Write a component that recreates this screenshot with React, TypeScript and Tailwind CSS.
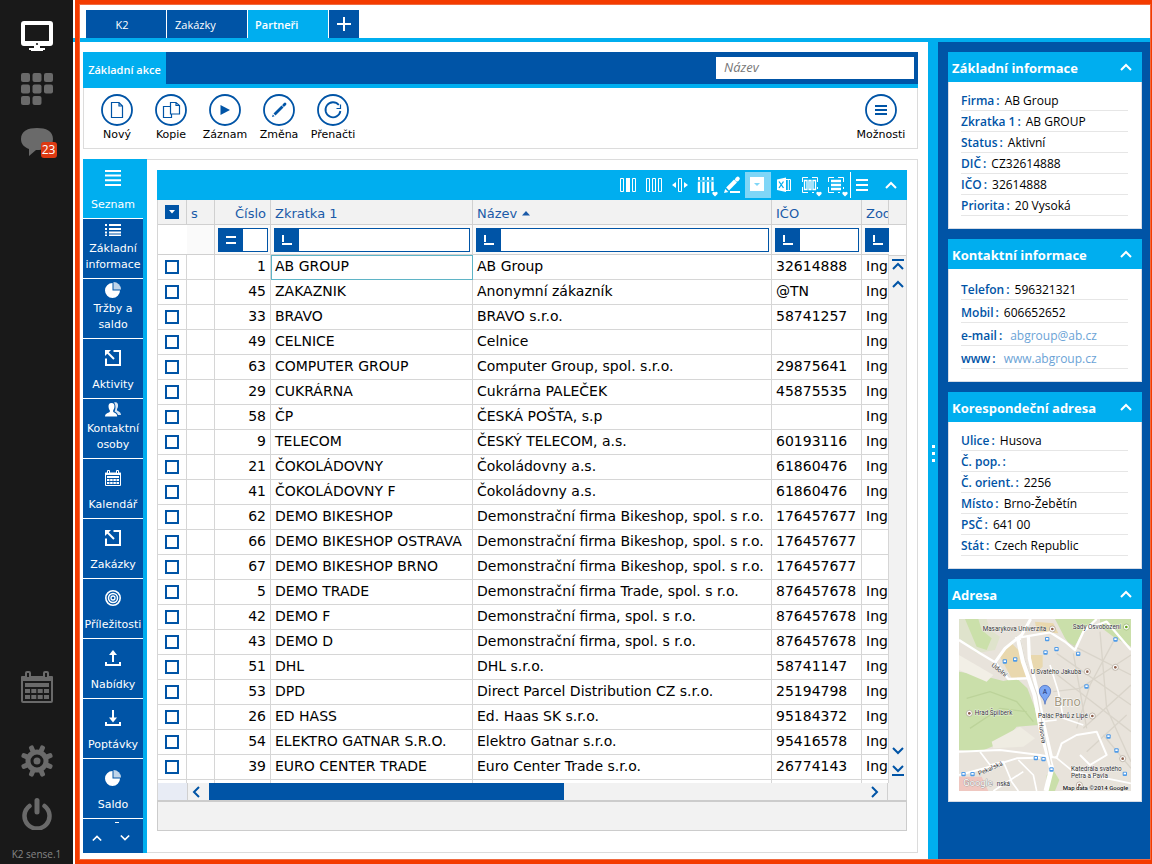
import type { ReactNode } from "react";

type Partner = {
  id: number;
  code: string;
  name: string;
  ico: string;
  owner: string;
};

const PARTNERS: Partner[] = [
  { id: 1, code: "AB GROUP", name: "AB Group", ico: "32614888", owner: "Ing" },
  { id: 45, code: "ZAKAZNIK", name: "Anonymní zákazník", ico: "@TN", owner: "Ing" },
  { id: 33, code: "BRAVO", name: "BRAVO s.r.o.", ico: "58741257", owner: "Ing" },
  { id: 49, code: "CELNICE", name: "Celnice", ico: "", owner: "Ing" },
  { id: 63, code: "COMPUTER GROUP", name: "Computer Group, spol. s.r.o.", ico: "29875641", owner: "Ing" },
  { id: 29, code: "CUKRÁRNA", name: "Cukrárna PALEČEK", ico: "45875535", owner: "Ing" },
  { id: 58, code: "ČP", name: "ČESKÁ POŠTA, s.p", ico: "", owner: "Ing" },
  { id: 9, code: "TELECOM", name: "ČESKÝ TELECOM, a.s.", ico: "60193116", owner: "Ing" },
  { id: 21, code: "ČOKOLÁDOVNY", name: "Čokoládovny a.s.", ico: "61860476", owner: "Ing" },
  { id: 41, code: "ČOKOLÁDOVNY F", name: "Čokoládovny a.s.", ico: "61860476", owner: "Ing" },
  { id: 62, code: "DEMO BIKESHOP", name: "Demonstrační firma Bikeshop, spol. s r.o.", ico: "176457677", owner: "Ing" },
  { id: 66, code: "DEMO BIKESHOP OSTRAVA", name: "Demonstrační firma Bikeshop, spol. s r.o.", ico: "176457677", owner: "" },
  { id: 67, code: "DEMO BIKESHOP BRNO", name: "Demonstrační firma Bikeshop, spol. s r.o.", ico: "176457677", owner: "" },
  { id: 5, code: "DEMO TRADE", name: "Demonstrační firma Trade, spol. s r.o.", ico: "876457678", owner: "Ing" },
  { id: 42, code: "DEMO F", name: "Demonstrační firma, spol. s r.o.", ico: "876457678", owner: "Ing" },
  { id: 43, code: "DEMO D", name: "Demonstrační firma, spol. s r.o.", ico: "876457678", owner: "Ing" },
  { id: 51, code: "DHL", name: "DHL s.r.o.", ico: "58741147", owner: "Ing" },
  { id: 53, code: "DPD", name: "Direct Parcel Distribution CZ s.r.o.", ico: "25194798", owner: "Ing" },
  { id: 26, code: "ED HASS", name: "Ed. Haas SK s.r.o.", ico: "95184372", owner: "Ing" },
  { id: 54, code: "ELEKTRO GATNAR S.R.O.", name: "Elektro Gatnar s.r.o.", ico: "95416578", owner: "Ing" },
  { id: 39, code: "EURO CENTER TRADE", name: "Euro Center Trade s.r.o.", ico: "26774143", owner: "Ing" },
];

type ChevronProps = { dir: "up" | "down" | "left" | "right"; size?: number; bar?: boolean };

function Chevron({ dir, size = 12, bar = false }: ChevronProps) {
  const paths = {
    up: "M1 9 L6 4 L11 9",
    down: "M1 3 L6 8 L11 3",
    left: "M9 1 L4 6 L9 11",
    right: "M3 1 L8 6 L3 11",
  };
  return (
    <svg width={size} height={size} viewBox="0 0 12 12" fill="none" stroke="currentColor" strokeWidth="2" overflow="visible">
      <path d={paths[dir]} />
      {bar && <path d={dir === "up" ? "M0 0 H12" : "M0 12 H12"} />}
    </svg>
  );
}

/* ---------- dark application bar ---------- */

function CalendarIcon({ size }: { size: number }) {
  return (
    <svg width={size} height={size} viewBox="0 0 32 32">
      <path
        fill="currentColor"
        fillRule="evenodd"
        d="M1 5 H4 V2 a2 2 0 0 1 2-2 h2 a2 2 0 0 1 2 2 V5 H22 V2 a2 2 0 0 1 2-2 h2 a2 2 0 0 1 2 2 V5 H31 a1 1 0 0 1 1 1 V30 a2 2 0 0 1-2 2 H2 a2 2 0 0 1-2-2 V6 a1 1 0 0 1 1-1 Z M6 2 V6 H8 V2 Z M24 2 V6 H26 V2 Z M2 10 V30 H30 V10 Z"
      />
      <g fill="currentColor">
        <rect x="4" y="12" width="24" height="4" />
        {[4, 10.3, 16.7, 23].map((x) => (
          <g key={x}>
            <rect x={x} y="18" width="5" height="4" />
            <rect x={x} y="24" width="5" height="4" />
          </g>
        ))}
      </g>
    </svg>
  );
}

function AppBar() {
  return (
    <aside className="flex w-[73px] shrink-0 flex-col items-center justify-between bg-[#191919] pb-[2px] pt-5 text-[#6a6a6a]">
      <nav className="flex flex-col items-center">
        <button type="button" aria-label="Plocha" className="text-white">
          <svg width="32" height="32" viewBox="0 0 32 32" fill="currentColor">
            <path fillRule="evenodd" d="M3 1 H29 a3 3 0 0 1 3 3 V23 a3 3 0 0 1-3 3 H3 a3 3 0 0 1-3-3 V4 a3 3 0 0 1 3-3 Z M4 5 V21 H28 V5 Z" />
            <circle cx="16" cy="24" r="1.1" fill="#191919" />
            <path d="M13 26 H19 V28 H24 V30 H22 V31 H10 V30 H8 V28 H13 Z" />
          </svg>
        </button>
        <button type="button" aria-label="Aplikace" className="mt-[21px]">
          <svg width="32" height="32" viewBox="0 0 32 32" fill="currentColor">
            {[[0, 0], [11.5, 0], [23, 0], [0, 11.5], [11.5, 11.5], [23, 11.5], [0, 23], [11.5, 23]].map(([x, y]) => (
              <rect key={`${x}-${y}`} x={x} y={y} width="9" height="9" rx="2" />
            ))}
          </svg>
        </button>
        <button type="button" aria-label="Zprávy" className="relative mt-[23px]">
          <svg width="32" height="29" viewBox="0 0 32 29" fill="currentColor">
            <path d="M16 0 C25 0 32 3 32 11 C32 20 24 22 15 22 L8 28 V21 C3 19 0 16 0 11 C0 3 7 0 16 0 Z" />
          </svg>
          <span className="absolute -right-1 top-[14px] flex h-4 w-4 items-center justify-center rounded-[3px] bg-[#dc3912] font-['Open_Sans',sans-serif] text-[12px] leading-none text-white">
            23
          </span>
        </button>
      </nav>
      <div className="flex flex-col items-center">
        <button type="button" aria-label="Kalendář">
          <CalendarIcon size={32} />
        </button>
        <button type="button" aria-label="Nastavení" className="mt-[42px]">
          <svg width="32" height="32" viewBox="0 0 32 32">
            <circle cx="16" cy="16" r="9" fill="none" stroke="currentColor" strokeWidth="5" />
            <circle cx="16" cy="16" r="3.5" fill="currentColor" />
            {[22.5, 67.5, 112.5, 157.5, 202.5, 247.5, 292.5, 337.5].map((a) => (
              <rect key={a} x="13.5" y="-0.5" width="5" height="7" rx="2" fill="currentColor" transform={`rotate(${a} 16 16)`} />
            ))}
          </svg>
        </button>
        <button type="button" aria-label="Vypnout" className="mt-[21px]">
          <svg width="32" height="32" viewBox="0 0 32 32" fill="none" stroke="currentColor" strokeWidth="4.5" strokeLinecap="round">
            <path d="M8.5 8 A12.5 12.5 0 1 0 23.5 8" />
            <path d="M16 2.5 V14" strokeWidth="5" />
          </svg>
        </button>
        <span className="mt-4 h-4 whitespace-nowrap font-['Open_Sans',sans-serif] text-[10px] leading-4 text-[#868686]">K2 sense.1</span>
      </div>
    </aside>
  );
}

/* ---------- tabs + ribbon ---------- */

function TabStrip() {
  return (
    <div className="flex gap-px border-b-4 border-[#00aeef] bg-white pl-[13px] pt-[10px] font-['Open_Sans',sans-serif] text-[11px] text-white">
      <button type="button" className="h-7 w-20 bg-[#0054a6] pr-2 pt-[2px]">K2</button>
      <button type="button" className="h-7 w-20 bg-[#0054a6] pl-2 pt-[2px] text-left">Zakázky</button>
      <button type="button" className="h-7 w-20 bg-[#00aeef] pl-[7px] pt-[2px] text-left font-semibold">Partneři</button>
      <button type="button" aria-label="Nová záložka" className="flex h-7 w-[30px] items-center justify-center bg-[#0054a6]">
        <svg width="14" height="14" viewBox="0 0 14 14" stroke="currentColor" strokeWidth="2">
          <path d="M7 0 V14 M0 7 H14" />
        </svg>
      </button>
    </div>
  );
}

function RibbonButton({ label, children }: { label: string; children: ReactNode }) {
  return (
    <button type="button" className="flex w-[54px] flex-col items-center gap-px text-[11px] leading-4 text-black">
      <svg width="32" height="32" viewBox="0 0 32 32" className="text-[#0054a6]" fill="none" stroke="currentColor">
        <circle cx="16" cy="16" r="15" strokeWidth="1.8" />
        {children}
      </svg>
      <span className="whitespace-nowrap">{label}</span>
    </button>
  );
}

function Ribbon() {
  return (
    <section>
      <div className="flex bg-[#0054a6]">
        <button type="button" className="w-[83px] whitespace-nowrap bg-[#00aeef] font-['Open_Sans',sans-serif] text-[11px] font-semibold text-white">
          Základní akce
        </button>
        <div className="flex flex-1 justify-end border-b-4 border-[#00aeef] py-[5px] pr-1">
          <input
            aria-label="Název"
            placeholder="Název"
            className="h-[22px] w-[198px] bg-white px-2 pb-[2px] font-['Open_Sans',sans-serif] text-[13px] italic text-black placeholder:text-[#777777]"
          />
        </div>
      </div>
      <div className="flex justify-between border border-t-0 border-[#dcdcdc] bg-white px-[6px] pb-[5px] pt-[6px]">
        <div className="flex">
          <RibbonButton label="Nový">
            <path d="M10.5 8.5 H18 L21.5 12 V23.5 H10.5 Z M18 8.5 V12 H21.5" strokeWidth="1.2" />
          </RibbonButton>
          <RibbonButton label="Kopie">
            <path d="M15.5 8.5 H21 L24.5 11.5 V20 H15.5 Z M21 8.5 V11.5 H24.5" strokeWidth="1.2" />
            <path d="M15.5 12.5 H8.5 V23.5 H16.5 V20" strokeWidth="1.2" />
          </RibbonButton>
          <RibbonButton label="Záznam">
            <path d="M11.5 11 L21 16 L11.5 21 Z" fill="currentColor" stroke="none" />
          </RibbonButton>
          <RibbonButton label="Změna">
            <path d="M11.5 20.5 L19.5 12.5" strokeWidth="2.8" />
            <path d="M20.8 11.2 L22 10" strokeWidth="2.8" strokeLinecap="round" />
            <path d="M9 23 L9.8 20.4 L11.6 22.2 Z" fill="currentColor" stroke="none" />
          </RibbonButton>
          <RibbonButton label="Přenačti">
            <path d="M21.8 11 A7.5 7.5 0 1 0 23.4 17" strokeWidth="1.8" />
            <path d="M23.5 10.5 V14.5 H19.5" strokeWidth="1.2" />
          </RibbonButton>
        </div>
        <div className="pr-[3px]">
          <RibbonButton label="Možnosti">
            <path d="M10 12 H22 M10 16 H22 M10 20 H22" strokeWidth="2" />
          </RibbonButton>
        </div>
      </div>
    </section>
  );
}

/* ---------- module navigation ---------- */

const PieIcon = (
  <svg width="16" height="16" viewBox="0 0 16 16" fill="currentColor">
    <path d="M7.5 1 A7.5 7.5 0 1 0 15 8.5 H7.5 Z" />
    <path d="M8.5 0 A7.5 7.5 0 0 1 16 7.5 H8.5 Z" fillOpacity="0.75" />
  </svg>
);

const ArrowBoxIcon = (
  <svg width="16" height="16" viewBox="0 0 16 16" fill="none" stroke="currentColor" strokeWidth="2">
    <path d="M8.5 1 H15 V15 H1 V8.5" />
    <path d="M2.5 2.5 L9 9" />
    <path d="M0 0 H6 L0 6 Z" fill="currentColor" stroke="none" />
  </svg>
);

type NavItem = { label: string; icon: ReactNode; tall?: boolean; active?: boolean };

const NAV: NavItem[] = [
  {
    label: "Seznam",
    active: true,
    icon: (
      <svg width="16" height="16" viewBox="0 0 16 16" fill="currentColor">
        <path d="M0 0 H16 V2 H0 Z M0 4.6 H16 V6.6 H0 Z M0 9.3 H16 V11.3 H0 Z M0 14 H16 V16 H0 Z" />
      </svg>
    ),
  },
  {
    label: "Základní informace",
    tall: true,
    icon: (
      <svg width="16" height="16" viewBox="0 0 16 16" fill="currentColor">
        <path d="M0 2 H2 V4 H0 Z M4 2 H16 V4 H4 Z M0 6 H2 V8 H0 Z M4 6 H16 V8 H4 Z M0 9.5 H2 V11.5 H0 Z M4 9.5 H16 V11.5 H4 Z" />
        <path d="M0 12.5 H2 V14 H0 Z M4 12.5 H16 V14 H4 Z" />
      </svg>
    ),
  },
  { label: "Tržby a saldo", tall: true, icon: PieIcon },
  { label: "Aktivity", icon: ArrowBoxIcon },
  {
    label: "Kontaktní osoby",
    tall: true,
    icon: (
      <svg width="16" height="16" viewBox="0 0 16 16" fill="currentColor">
        <path d="M6.5 1 C9 1 9.8 3 9.4 5.3 C9.2 6.8 8.6 7.6 8.2 8.2 V10 C10 11 12 11.2 12.2 14.5 H0 C0.2 11.2 3 11 4.8 10 V8.2 C4.2 7.6 3.8 6.8 3.6 5.3 C3.2 3 4 1 6.5 1 Z" />
        <path d="M10 0.2 C12.4 0 13.4 2 13 4.2 C12.8 5.6 12.4 6.4 12 7 V8.6 C13.6 9.6 15.8 10 16 13 H13 C12.4 11 11 10.2 9.6 9.4 C10.6 7.6 11.2 3 9 0.5 Z" fillOpacity="0.85" />
      </svg>
    ),
  },
  { label: "Kalendář", icon: <CalendarIcon size={16} /> },
  { label: "Zakázky", icon: ArrowBoxIcon },
  {
    label: "Příležitosti",
    icon: (
      <svg width="16" height="16" viewBox="0 0 16 16" fill="none" stroke="currentColor">
        <circle cx="8" cy="8" r="7.2" strokeWidth="1.6" />
        <circle cx="8" cy="8" r="4.5" strokeWidth="1.5" />
        <circle cx="8" cy="8" r="2" strokeWidth="1.3" />
      </svg>
    ),
  },
  {
    label: "Nabídky",
    icon: (
      <svg width="16" height="16" viewBox="0 0 16 16" fill="none" stroke="currentColor" strokeWidth="2">
        <path d="M1 12 V15 H15 V12 M8 12 V3" />
        <path d="M8 0 L12 5 H4 Z" fill="currentColor" stroke="none" />
      </svg>
    ),
  },
  {
    label: "Poptávky",
    icon: (
      <svg width="16" height="16" viewBox="0 0 16 16" fill="none" stroke="currentColor" strokeWidth="2">
        <path d="M1 12 V15 H15 V12 M8 0 V9" />
        <path d="M8 12.5 L12 7.5 H4 Z" fill="currentColor" stroke="none" />
      </svg>
    ),
  },
  { label: "Saldo", icon: PieIcon },
];

function ModuleNav() {
  return (
    <nav className="flex w-16 shrink-0 flex-col bg-[#00aeef] text-[11px] leading-4 text-white">
      {NAV.map((item) => (
        <button
          key={item.label}
          type="button"
          className={
            "flex h-[60px] w-[60px] flex-col items-center justify-between border-b border-white pb-[5px] " +
            (item.tall ? "pt-[3px] " : "pt-[11px] ") +
            (item.active ? "bg-[#00aeef]" : "bg-[#0054a6]")
          }
        >
          {item.icon}
          <span>{item.label}</span>
        </button>
      ))}
      <div className="flex w-[60px] flex-1 flex-col items-center bg-[#0054a6] pt-[3px]">
        <span className="ml-2 h-px w-1 bg-white" />
        <div className="flex flex-1 items-center gap-[18px] pr-1">
          <button type="button" aria-label="Nahoru">
            <Chevron dir="up" size={10} />
          </button>
          <button type="button" aria-label="Dolů">
            <Chevron dir="down" size={10} />
          </button>
        </div>
      </div>
    </nav>
  );
}

/* ---------- grid ---------- */

function ToolButton({ label, active, children }: { label: string; active?: boolean; children: ReactNode }) {
  return (
    <button type="button" aria-label={label} className={"h-[26px] w-[26px] " + (active ? "bg-[#7fd6f7]" : "")}>
      <svg width="26" height="26" viewBox="0 0 26 26" fill="none" stroke="currentColor">
        {children}
      </svg>
    </button>
  );
}

const MenuMark = <path d="M22 24.5 L19.5 22 a1.4 1.4 0 0 1 2.5-1.4 a1.4 1.4 0 0 1 2.5 1.4 Z" fill="currentColor" stroke="none" />;

const CornerFrame = <path d="M5.5 10 V5.5 H11 M15 5.5 H20.5 V10 M5.5 15 V20.5 H11 M15 20.5 H17 M20.5 15 V17" />;

function GridToolbar() {
  return (
    <div className="flex h-[30px] items-center justify-end bg-[#00aeef] text-white">
      <ToolButton label="Zobrazit sloupec">
        <path d="M5.5 6.5 H8.5 V19.5 H5.5 Z M17.5 6.5 H20.5 V19.5 H17.5 Z" />
        <rect x="11" y="6" width="4" height="14" fill="currentColor" stroke="none" />
      </ToolButton>
      <ToolButton label="Sloupce">
        <path d="M5.5 6.5 H8.5 V19.5 H5.5 Z M11.5 6.5 H14.5 V19.5 H11.5 Z M17.5 6.5 H20.5 V19.5 H17.5 Z" />
      </ToolButton>
      <ToolButton label="Šířka sloupce">
        <path d="M11.5 6.5 H14.5 V19.5 H11.5 Z" />
        <path d="M9 10 V16 L5 13 Z M17 10 V16 L21 13 Z" fill="currentColor" stroke="none" />
      </ToolButton>
      <ToolButton label="Výběr sloupců">
        <path d="M6 10 V21 M10.5 10 V21 M15 10 V21 M19.5 10 V19" strokeWidth="2.4" />
        <path d="M6 5 V8 M10.5 5 V8 M15 5 V8 M19.5 5 V8" strokeWidth="2" />
        <path d="M5 9 H21" strokeOpacity="0.6" />
        {MenuMark}
      </ToolButton>
      <ToolButton label="Upravit">
        <path d="M11 20 H21" strokeWidth="2" />
        <path d="M8.6 17 L16.5 9" strokeWidth="4" />
        <path d="M18 7.5 L18.8 6.7" strokeWidth="4" strokeLinecap="round" />
        <path d="M5 21 L6.2 17 L9.4 20 Z" fill="currentColor" stroke="none" />
      </ToolButton>
      <ToolButton label="Filtr" active>
        <rect x="5" y="5" width="14" height="14" fill="currentColor" stroke="none" />
        <path d="M9 11 H15 L12 14 Z" fill="#7fd6f7" stroke="none" />
      </ToolButton>
      <ToolButton label="Export do Excelu">
        <path d="M6 7.5 L15 5.5 V20 L6 18 Z" fill="currentColor" stroke="none" />
        <path d="M15 7.5 H19.5 V18.5 H15 M17.3 7.5 V18.5" />
        <path d="M8 9.5 L12.5 16 M12.5 9.5 L8 16" stroke="#00aeef" strokeWidth="1.3" />
      </ToolButton>
      <ToolButton label="Označit sloupce">
        {CornerFrame}
        <path d="M7.5 8.5 H10 V17.5 H7.5 Z M12 8.5 H14 V17.5 H12 Z M16 8.5 H18.5 V17.5 H16 Z" strokeWidth="1.3" />
        {MenuMark}
      </ToolButton>
      <ToolButton label="Označit řádky">
        {CornerFrame}
        <path d="M8 9 H18 M8 13 H18 M8 17 H18" strokeWidth="2.4" />
        {MenuMark}
      </ToolButton>
      <button type="button" aria-label="Nabídka" className="ml-px flex h-[26px] w-[18px] items-center justify-end border-l border-white">
        <svg width="12" height="12" viewBox="0 0 12 12" stroke="currentColor" strokeWidth="2">
          <path d="M0 1 H12 M0 6 H12 M0 11 H12" />
        </svg>
      </button>
      <button type="button" aria-label="Sbalit" className="ml-[17px] mr-[10px]">
        <Chevron dir="up" />
      </button>
    </div>
  );
}

function FilterField({ label, op }: { label: string; op: "equals" | "starts" }) {
  return (
    <div className="flex h-6 border border-[#0054a6] bg-white">
      <button type="button" aria-label={`Podmínka ${label}`} className="flex w-6 shrink-0 items-center justify-center bg-[#0054a6] text-white">
        <svg width="12" height="12" viewBox="0 0 12 12" fill="none" stroke="currentColor" strokeWidth="2">
          {op === "equals" ? <path d="M1 3 H11 M1 9 H11" /> : <path d="M2 1 V8 M1 10 H11" />}
        </svg>
      </button>
      <input aria-label={`Filtr ${label}`} className="w-full min-w-0 flex-1 bg-white px-1 text-[13px] outline-none" />
    </div>
  );
}

const TH = "h-[25px] overflow-hidden border-b border-r border-[#d0d0d0] bg-[#f2f2f2] p-0 pl-1 pt-[3px] text-left font-normal whitespace-nowrap";
const FILTER = "h-[30px] overflow-hidden border-b border-r border-[#d0d0d0] bg-[#fafafa] p-0 pl-[3px] pr-[2px]";
const TD = "h-[25px] overflow-hidden border-b border-r border-[#d6d6d6] p-0 pb-[2px] pl-1 whitespace-nowrap";

function PartnerTable() {
  return (
    <div className="flex border-x border-[#d6d6d6] bg-white">
      <div className="min-w-0 flex-1">
        <table className="w-full table-fixed border-separate border-spacing-0 text-[14px] leading-5 text-black">
          <colgroup>
            <col className="w-[29px]" />
            <col className="w-[28px]" />
            <col className="w-[56px]" />
            <col className="w-[202px]" />
            <col />
            <col className="w-[90px]" />
            <col className="w-[27px]" />
          </colgroup>
          <thead className="text-[13px] text-[#1a5aa8]">
            <tr>
              <th className="h-[25px] border-b border-r border-[#d0d0d0] bg-[#f2f2f2] p-0">
                <button type="button" aria-label="Označení" className="mx-auto flex h-[14px] w-[14px] items-center justify-center bg-[#0054a6] text-white">
                  <svg width="6" height="4" viewBox="0 0 6 4" fill="currentColor">
                    <path d="M0 0 H6 L3 3.5 Z" />
                  </svg>
                </button>
              </th>
              <th className={TH}>s</th>
              <th className="h-[25px] border-b border-r border-[#d0d0d0] bg-[#f2f2f2] p-0 pr-1 pt-[3px] text-right font-normal">Číslo</th>
              <th className={TH}>Zkratka 1</th>
              <th className={TH}>
                <span className="flex items-center gap-[5px]">
                  Název
                  <svg width="8" height="5" viewBox="0 0 8 5" fill="currentColor">
                    <path d="M4 0 L8 4.5 H0 Z" />
                  </svg>
                </span>
              </th>
              <th className={TH}>IČO</th>
              <th className={TH}>Zod</th>
            </tr>
            <tr>
              <td className="h-[30px] border-b border-[#d0d0d0] bg-white p-0" />
              <td className="h-[30px] border-b border-r border-[#d0d0d0] bg-[#fafafa] p-0" />
              <td className={FILTER}>
                <FilterField label="Číslo" op="equals" />
              </td>
              <td className={FILTER}>
                <FilterField label="Zkratka 1" op="starts" />
              </td>
              <td className={FILTER}>
                <FilterField label="Název" op="starts" />
              </td>
              <td className={FILTER}>
                <FilterField label="IČO" op="starts" />
              </td>
              <td className="h-[30px] overflow-hidden border-b border-[#d0d0d0] bg-[#fafafa] p-0 pl-[3px]">
                <FilterField label="Zod" op="starts" />
              </td>
            </tr>
          </thead>
          <tbody>
            {PARTNERS.map((p, i) => (
              <tr key={p.id}>
                <td className="h-[25px] border-b border-r border-[#d6d6d6] p-0">
                  <input
                    type="checkbox"
                    aria-label={`Označit ${p.code}`}
                    className="mx-auto block h-[14px] w-[14px] appearance-none border-2 border-[#0054a6] bg-white checked:bg-[#00aeef]"
                  />
                </td>
                <td className={TD} />
                <td className="h-[25px] border-b border-r border-[#d6d6d6] p-0 pb-[2px] pr-1 text-right">{p.id}</td>
                <td className={TD + (i === 0 ? " outline -outline-offset-1 outline-[#5fb4c6]" : "")}>{p.code}</td>
                <td className={TD}>{p.name}</td>
                <td className={TD}>{p.ico}</td>
                <td className={TD}>{p.owner}</td>
              </tr>
            ))}
            <tr aria-hidden="true">
              {[0, 1, 2, 3, 4, 5, 6].map((c) => (
                <td key={c} className="h-[3px] border-r border-[#d6d6d6] p-0" />
              ))}
            </tr>
          </tbody>
        </table>
      </div>
      <div className="flex w-[17px] shrink-0 flex-col text-[#0054a6]">
        <div className="h-[25px] border-b border-[#d0d0d0] bg-[#f2f2f2]" />
        <div className="h-[30px] bg-white" />
        <div className="flex flex-1 flex-col items-center justify-between border-t border-[#d0d0d0] bg-[#f2f2f2] pb-[8px] pt-[4px]">
          <div className="flex flex-col gap-[6px]">
            <button type="button" aria-label="Na začátek">
              <Chevron dir="up" bar />
            </button>
            <button type="button" aria-label="O řádek výš">
              <Chevron dir="up" />
            </button>
          </div>
          <div className="flex flex-col gap-[6px]">
            <button type="button" aria-label="O řádek níž">
              <Chevron dir="down" />
            </button>
            <button type="button" aria-label="Na konec">
              <Chevron dir="down" bar />
            </button>
          </div>
        </div>
      </div>
    </div>
  );
}

function GridPanel() {
  return (
    <section className="flex min-w-0 flex-1 flex-col border border-l-0 border-[#dcdcdc] bg-white pb-[21px] pl-[10px] pr-[10px] pt-[10px]">
      <GridToolbar />
      <PartnerTable />
      <div className="flex h-[17px] border-x border-[#d6d6d6] bg-[#f2f2f2] text-[#0054a6]">
        <div className="w-[30px] border-r border-[#d0d0d0] bg-[#e8ecf5]" />
        <button type="button" aria-label="Vlevo" className="flex w-[21px] items-center justify-center pr-[6px]">
          <Chevron dir="left" />
        </button>
        <div className="flex-1">
          <div className="h-full w-[54%] bg-[#0054a6]" />
        </div>
        <button type="button" aria-label="Vpravo" className="flex w-[21px] items-center justify-center pr-1">
          <Chevron dir="right" />
        </button>
        <div className="w-[19px] border-l border-[#d0d0d0]" />
      </div>
      <div className="flex-1 border border-t-2 border-[#cccccc] bg-[#f2f2f2]" />
    </section>
  );
}

/* ---------- preview column ---------- */

type Field = { label: string; value: string; href?: string };

function Card({ title, children }: { title: string; children: ReactNode }) {
  return (
    <section>
      <header className="flex h-[30px] items-center justify-between bg-[#00aeef] pl-1 pr-[10px] text-white">
        <h2 className="whitespace-nowrap pt-[3px] text-[13px] font-bold">{title}</h2>
        <button type="button" aria-label={`Sbalit ${title}`}>
          <Chevron dir="up" />
        </button>
      </header>
      <div className="border border-t-0 border-[#d6dce6] bg-white">{children}</div>
    </section>
  );
}

function FieldList({ fields, roomy }: { fields: Field[]; roomy?: boolean }) {
  return (
    <dl className="pb-3 pl-3 pr-[13px] pt-2 text-[12px]">
      {fields.map((f) => (
        <div
          key={f.label}
          className={"flex items-center gap-[5px] whitespace-nowrap border-b border-[#e6e6e6] " + (roomy ? "h-[23px] pt-[3px]" : "h-[21px] pt-[2px]")}
        >
          <dt className="flex gap-[2px] font-semibold text-[#0054a6]">
            {f.label}
            <span>:</span>
          </dt>
          <dd className="text-black">
            {f.href ? (
              <a href={f.href} className="pl-[3px] text-[#6ba3d6]">
                {f.value}
              </a>
            ) : (
              f.value
            )}
          </dd>
        </div>
      ))}
    </dl>
  );
}

const STOPS = [[316, 232], [349, 222], [414, 236], [321, 192], [526, 193], [439, 334], [505, 484], [529, 526], [287, 549], [310, 552], [334, 583], [70, 597], [97, 597], [554, 596], [194, 259], [225, 253]];
const PLACES = [[337, 162], [442, 290], [526, 277], [88, 415], [457, 423], [548, 551], [418, 630]];

function CityMap() {
  return (
    <svg viewBox="57 132 516 516" className="block w-full" role="img" aria-label="Mapa">
      <rect x="57" y="132" width="516" height="516" fill="#e8e3db" />
      <path d="M57 132 H140 L150 165 L180 185 L165 225 L110 235 L57 190 Z" fill="#dfe3cc" />
      <path d="M75 132 L115 132 L125 165 L155 190 L140 225 L110 215 Z" fill="#cbe0aa" />
      <path d="M57 290 L120 300 L190 318 L230 310 L262 340 L285 400 L295 450 L230 455 L190 500 L120 530 L57 525 Z" fill="#cadfaa" />
      <path d="M57 240 L160 300 L140 320 L57 285 Z" fill="#f2efe6" />
      <path d="M155 500 L240 455 L285 490 L250 515 L160 520 Z" fill="#efece2" />
      <path d="M345 132 H470 L430 165 L400 222 L375 190 Z" fill="#cadfaa" />
      <path d="M480 132 H573 V215 L520 185 L480 155 Z" fill="#cadfaa" />
      <path d="M320 600 L340 585 L358 615 L345 648 H318 Z" fill="#cadfaa" />
      <path d="M180 245 L215 205 L245 235 L262 305 L215 310 Z M272 240 H308 V275 L280 300 Z M285 140 L340 145 L355 175 L290 170 Z" fill="#e9d8ae" />
      <path d="M57 605 H125 L145 648 H57 Z" fill="#efc7c0" />

      <g fill="none" stroke="#d9d4ca" strokeWidth="4">
        <path d="M375 200 L573 300 M350 235 L573 390 M340 290 L573 470 M400 235 L440 460 M480 170 L500 400 L573 560" />
        <path d="M573 240 L420 340 L340 350 M573 330 L430 460 M520 200 L450 330 L410 460 M560 420 L440 530 M490 480 L573 580" />
        <path d="M80 370 L150 350 L230 380 L280 440 M90 460 L180 400 L260 410" stroke="#bcd39a" />
      </g>
      <g fill="none" stroke="#ffffff" strokeLinejoin="round">
        <path d="M57 195 L120 235 L165 262 L205 312 L262 310" strokeWidth="7" />
        <path d="M165 262 L195 220 L245 180 L272 132" strokeWidth="9" />
        <path d="M225 190 L330 172 L375 200 L405 225 L430 170 L470 132" strokeWidth="7" />
        <path d="M235 190 L250 260 L285 360 L305 470 L335 580 L318 648" strokeWidth="15" />
        <path d="M265 180 L268 250 L290 340 L312 450 L335 550" strokeWidth="10" />
        <path d="M430 165 L500 140 L573 225" strokeWidth="7" />
        <path d="M57 530 L180 525 L300 540 L350 548 L365 505 L410 480 L470 470 L500 540 L450 570 L420 540" strokeWidth="6" />
        <path d="M57 600 L150 575 L230 550 L300 548" strokeWidth="6" />
        <path d="M120 530 L150 570 L190 560 L215 620 L235 648 M235 555 L280 600 L290 648 M160 648 L250 590" strokeWidth="5" />
        <path d="M330 270 L355 350 L370 430 L430 450 M305 440 L350 435 M345 545 L400 590 L573 625" strokeWidth="5" />
      </g>
      <path d="M242 195 L256 258 L291 360 L311 470 L333 570" fill="none" stroke="#cfc8bb" strokeWidth="2" />

      {STOPS.map(([x, y]) => (
        <g key={`${x}-${y}`}>
          <rect x={x - 6} y={y - 6} width="13" height="13" rx="3" fill="#4f9be8" />
          <rect x={x - 3} y={y - 3} width="7" height="5" fill="#ffffff" />
        </g>
      ))}
      {PLACES.map(([x, y]) => (
        <g key={`${x}-${y}`}>
          <circle cx={x} cy={y} r="9" fill="#ffffff" stroke="#a89c8c" strokeWidth="2" />
          <circle cx={x} cy={y} r="4" fill="#8b5e4a" />
        </g>
      ))}
      <circle cx="559" cy="156" r="9" fill="#ffffff" stroke="#8fae62" strokeWidth="2" />
      <circle cx="559" cy="156" r="4" fill="#5fa019" />

      <g fill="#2f2f2f" fontFamily="Roboto, sans-serif" fontSize="19" stroke="#ffffff" strokeWidth="2" paintOrder="stroke">
        <text x="128" y="169">Masarykova Univerzita</text>
        <text x="398" y="162">Sady Osvobození</text>
        <text x="272" y="296">U Svatého Jakuba</text>
        <text x="104" y="421">Hrad Špilberk</text>
        <text x="294" y="429">Palác Pánů z Lipé</text>
        <text x="393" y="588">Katedrála svatého</text>
        <text x="393" y="608">Petra a Pavla</text>
        <text transform="translate(153 273) rotate(38)">Údolní</text>
        <text transform="translate(296 442) rotate(82)">Husova</text>
        <text transform="translate(118 602) rotate(-24)">Pekařská</text>
        <text x="170" y="634">nská</text>
      </g>
      <text x="343" y="393" fill="#a49a83" stroke="#ffffff" strokeWidth="3" paintOrder="stroke" fontFamily="Roboto, sans-serif" fontSize="38">
        Brno
      </text>
      <text x="70" y="633" fill="#ffffff" stroke="#8a8a8a" strokeWidth="2" paintOrder="stroke" fontFamily="Roboto, sans-serif" fontSize="28">
        Google
      </text>
      <text x="368" y="644" fill="#111111" stroke="#ffffff" strokeWidth="2" paintOrder="stroke" fontFamily="Roboto, sans-serif" fontSize="18" fontWeight="500">
        Map data ©2014 Google
      </text>

      <path d="M315 388 C313 368 298 364 298 348 A17 17 0 0 1 332 348 C332 364 317 368 315 388 Z" fill="#7ba6f4" stroke="#3c62b8" strokeWidth="2" />
      <text x="315" y="356" textAnchor="middle" fill="#1c2f66" fontFamily="Roboto, sans-serif" fontSize="20">
        A
      </text>
    </svg>
  );
}

function PreviewColumn() {
  return (
    <aside className="flex w-[214px] shrink-0 flex-col gap-[10px] bg-[#0054a6] pb-5 pl-[10px] pr-[10px] pt-[10px] font-['Open_Sans',sans-serif]">
      <Card title="Základní informace">
        <FieldList
          fields={[
            { label: "Firma", value: "AB Group" },
            { label: "Zkratka 1", value: "AB GROUP" },
            { label: "Status", value: "Aktivní" },
            { label: "DIČ", value: "CZ32614888" },
            { label: "IČO", value: "32614888" },
            { label: "Priorita", value: "20 Vysoká" },
          ]}
        />
      </Card>
      <Card title="Kontaktní informace">
        <FieldList
          roomy
          fields={[
            { label: "Telefon", value: "596321321" },
            { label: "Mobil", value: "606652652" },
            { label: "e-mail", value: "abgroup@ab.cz", href: "mailto:abgroup@ab.cz" },
            { label: "www", value: "www.abgroup.cz", href: "#www" },
          ]}
        />
      </Card>
      <Card title="Korespondeční adresa">
        <FieldList
          fields={[
            { label: "Ulice", value: "Husova" },
            { label: "Č. pop.", value: "" },
            { label: "Č. orient.", value: "2256" },
            { label: "Místo", value: "Brno-Žebětín" },
            { label: "PSČ", value: "641 00" },
            { label: "Stát", value: "Czech Republic" },
          ]}
        />
      </Card>
      <Card title="Adresa">
        <div className="p-[10px]">
          <CityMap />
        </div>
      </Card>
    </aside>
  );
}

export default function App() {
  return (
    <div className="flex min-h-screen bg-white font-['DejaVu_Sans',Verdana,sans-serif]">
      <AppBar />
      <div className="relative flex min-w-0 flex-1 flex-col">
        <TabStrip />
        <div className="flex flex-1">
          <main className="flex min-w-0 flex-1 flex-col gap-[10px] pb-[11px] pl-[10px] pr-[10px] pt-[10px]">
            <Ribbon />
            <div className="flex flex-1">
              <ModuleNav />
              <GridPanel />
            </div>
          </main>
          <div className="flex w-[10px] shrink-0 flex-col items-center justify-center gap-1 bg-[#00aeef]">
            <span className="h-[3px] w-[3px] bg-white" />
            <span className="h-[3px] w-[3px] bg-white" />
            <span className="h-[3px] w-[3px] bg-white" />
          </div>
          <PreviewColumn />
        </div>
        <div className="pointer-events-none absolute inset-y-0 left-[2px] right-0 border-4 border-r border-[#f43b00] shadow-[inset_0_0_0_1px_#f06a40]" />
      </div>
    </div>
  );
}
